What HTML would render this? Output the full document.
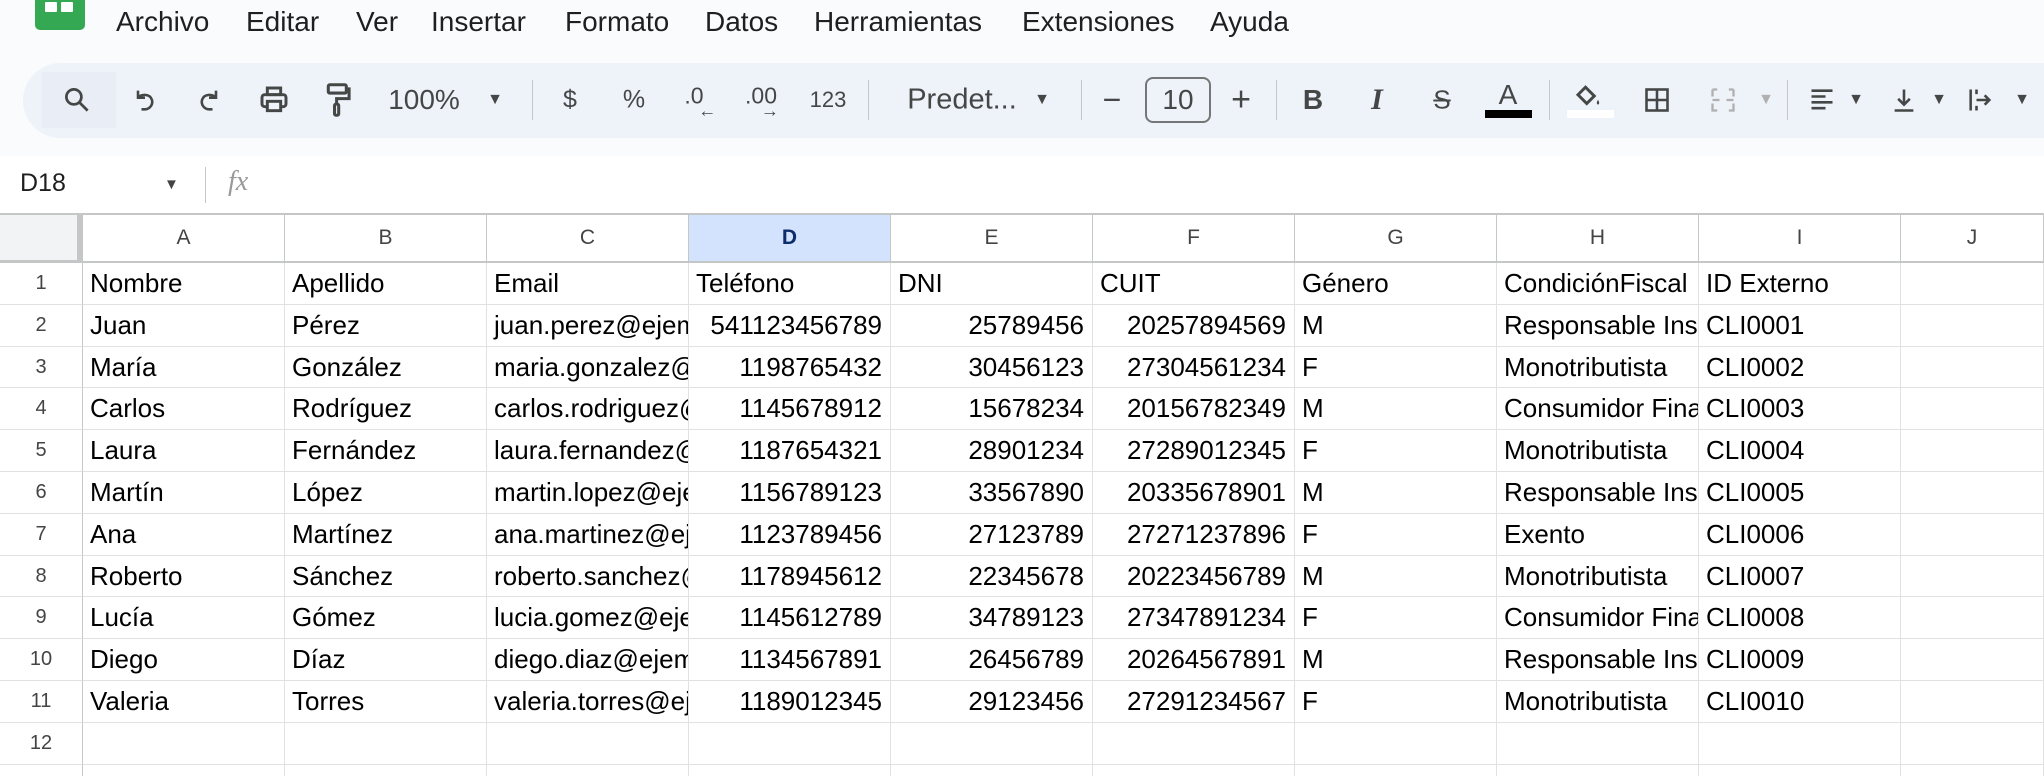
<!DOCTYPE html>
<html style="height:776px;overflow:hidden"><head><meta charset="utf-8"><style>
*{box-sizing:border-box;margin:0;padding:0}
body{width:2044px;height:776px;overflow:hidden;background:#fff;font-family:"Liberation Sans",Arial,sans-serif;position:relative;color:#1f1f1f}
.top{position:absolute;left:0;top:0;width:2044px;height:156px;background:#f9fbfd}
.menu{position:absolute;top:6px;font-size:28px;color:#1f1f1f}
.pill{position:absolute;left:23px;top:63px;width:2100px;height:75px;border-radius:38px;background:#eef2f9}
.ic{position:absolute;top:100px;transform:translate(-50%,-50%);color:#444746;font-size:24px;white-space:nowrap}
.sep{position:absolute;top:80px;width:1px;height:40px;background:#c7c7c7}
svg{display:block}
.wrap{position:absolute;left:0;top:213px;width:2044px;height:563px;overflow:hidden}
.grid{display:grid;grid-template-columns:83px repeat(9,202px) 143px;grid-template-rows:48px repeat(13,41.8px);border-top:2px solid #c4c7c5}
.grid div{border-right:1px solid #e1e1e1;border-bottom:1px solid #e1e1e1;white-space:nowrap;overflow:hidden;font-size:26px;line-height:41px;padding:0 7px;color:#000}
.grid .h{text-align:center;font-size:21px;color:#444;line-height:46px;border-right-color:#c4c7c5;border-bottom:2px solid #c4c7c5}
.grid .hd{background:#d3e3fd;color:#0b2e6b;font-weight:bold}
.grid .corner{background:#f1f3f4;border-right:6px solid #c4c7c5;border-bottom:3px solid #c4c7c5}
.grid .r{text-align:center;font-size:20px;color:#444;border-right:1px solid #c4c7c5;padding:0}
.grid .n{text-align:right;padding-right:8px}
</style></head><body>
<div class="top"></div>
<div style="position:absolute;left:35px;top:-6px;width:50px;height:36px;background:#34a853;border-radius:5px"></div>
<div style="position:absolute;left:45px;top:2px;width:12px;height:10px;background:#fff;border-radius:1px"></div>
<div style="position:absolute;left:61px;top:2px;width:12px;height:10px;background:#fff;border-radius:1px"></div>
<div class="menu" style="left:116px">Archivo</div>
<div class="menu" style="left:246px">Editar</div>
<div class="menu" style="left:356px">Ver</div>
<div class="menu" style="left:431px">Insertar</div>
<div class="menu" style="left:565px">Formato</div>
<div class="menu" style="left:705px">Datos</div>
<div class="menu" style="left:814px">Herramientas</div>
<div class="menu" style="left:1022px">Extensiones</div>
<div class="menu" style="left:1210px">Ayuda</div>

<div class="pill"></div>
<div style="position:absolute;left:42px;top:72px;width:74px;height:56px;background:#e9eef6"></div>
<div class="ic" style="left:77px"><svg width="30" height="30" viewBox="0 0 24 24" fill="none" stroke="#444746" stroke-width="2.2"><circle cx="9.5" cy="9.5" r="6"/><path d="M14 14l6.5 6.5"/></svg></div>
<div class="ic" style="left:145px"><svg width="28" height="28" viewBox="0 0 24 24" fill="none" stroke="#444746" stroke-width="2.2"><path d="M6 4v6h6M6 10c2-3 10-4 12 2 1 4-2 8-6 8H9"/></svg></div>
<div class="ic" style="left:209px"><svg width="28" height="28" viewBox="0 0 24 24" fill="none" stroke="#444746" stroke-width="2.2"><path d="M18 4v6h-6M18 10c-2-3-10-4-12 2-1 4 2 8 6 8h3"/></svg></div>
<div class="ic" style="left:274px"><svg width="32" height="32" viewBox="0 0 24 24" fill="none" stroke="#444746" stroke-width="2.2"><rect x="7" y="3" width="10" height="5"/><rect x="3" y="8" width="18" height="9" rx="2"/><rect x="7" y="13" width="10" height="7" fill="#eef2f9"/></svg></div>
<div class="ic" style="left:338px"><svg width="28" height="36" viewBox="0 0 20 26" fill="none" stroke="#444746" stroke-width="2.2"><rect x="3" y="2" width="13" height="6" rx="1"/><path d="M16 5h2v7H9v4"/><rect x="7.5" y="16" width="3" height="8" rx="1"/></svg></div>
<div class="ic" style="left:424px;font-size:28px">100%</div>
<div class="ic" style="left:495px;font-size:16px">▼</div>
<div class="sep" style="left:532px"></div>
<div class="ic" style="left:570px;font-size:25px">$</div>
<div class="ic" style="left:634px;font-size:25px">%</div>
<div class="ic" style="left:694px;font-size:23px;top:96px">.0<span style="position:absolute;left:14px;top:18px;font-size:18px">←</span></div>
<div class="ic" style="left:761px;font-size:23px;top:96px">.00<span style="position:absolute;left:16px;top:18px;font-size:18px">→</span></div>
<div class="ic" style="left:828px;font-size:22px">123</div>
<div class="sep" style="left:868px"></div>
<div class="ic" style="left:962px;font-size:29px">Predet...</div>
<div class="ic" style="left:1042px;font-size:16px">▼</div>
<div class="sep" style="left:1081px"></div>
<div class="ic" style="left:1112px;font-size:32px">−</div>
<div style="position:absolute;left:1145px;top:77px;width:66px;height:46px;border:2px solid #747775;border-radius:8px;text-align:center;line-height:42px;font-size:28px;color:#444746">10</div>
<div class="ic" style="left:1241px;font-size:34px">+</div>
<div class="sep" style="left:1276px"></div>
<div class="ic" style="left:1313px;font-size:28px;font-weight:bold">B</div>
<div class="ic" style="left:1377px;font-size:30px;font-style:italic;font-family:'Liberation Serif',serif;font-weight:bold">I</div>
<div class="ic" style="left:1442px;font-size:26px;text-decoration:line-through">S</div>
<div class="ic" style="left:1508px;font-size:28px;top:95px">A</div>
<div style="position:absolute;left:1485px;top:110px;width:47px;height:8px;background:#000"></div>
<div class="sep" style="left:1549px"></div>
<div class="ic" style="left:1588px;top:96px"><svg width="30" height="30" viewBox="0 0 24 24" fill="#444746"><path d="M4 11l6-6 7 7-6 6z" fill="none" stroke="#444746" stroke-width="2.4"/><path d="M20 15c1 2 1.5 3 0 4-1.5-1-1-2 0-4z"/></svg></div>
<div style="position:absolute;left:1567px;top:110px;width:47px;height:8px;background:#fff"></div>
<div class="ic" style="left:1657px"><svg width="28" height="28" viewBox="0 0 24 24" fill="none" stroke="#444746" stroke-width="2.2"><rect x="3" y="3" width="18" height="18"/><path d="M12 3v18M3 12h18"/></svg></div>
<div class="ic" style="left:1723px"><svg width="28" height="30" viewBox="0 0 24 24" fill="none" stroke="#b0b0b0" stroke-width="2"><path d="M3 3h4M3 3v6M3 15v6h4M21 3h-4M21 3v6M21 15v6h-4M3 12h6M21 12h-6"/></svg></div>
<div class="ic" style="left:1766px;font-size:16px;color:#b0b0b0">▼</div>
<div class="sep" style="left:1787px"></div>
<div class="ic" style="left:1822px"><svg width="28" height="28" viewBox="0 0 24 24" stroke="#444746" stroke-width="2.2"><path d="M3 4h18M3 9h12M3 14h18M3 19h12"/></svg></div>
<div class="ic" style="left:1856px;font-size:16px">▼</div>
<div class="ic" style="left:1904px"><svg width="28" height="30" viewBox="0 0 24 24" fill="none" stroke="#444746" stroke-width="2.2"><path d="M12 3v13M7 11l5 5 5-5M4 21h16"/></svg></div>
<div class="ic" style="left:1939px;font-size:16px">▼</div>
<div class="ic" style="left:1980px"><svg width="28" height="30" viewBox="0 0 24 24" fill="none" stroke="#444746" stroke-width="2.2"><path d="M4 3v18M9 12h11M16 8l4 4-4 4M9 3v4M9 17v4"/></svg></div>
<div class="ic" style="left:2022px;font-size:16px">▼</div>

<div style="position:absolute;left:20px;top:169px;font-size:25px;color:#1f1f1f">D18</div>
<div style="position:absolute;left:164px;top:176px;font-size:15px;color:#444">▼</div>
<div style="position:absolute;left:205px;top:167px;width:1px;height:36px;background:#c7c7c7"></div>
<div style="position:absolute;left:228px;top:166px;font-size:28px;font-style:italic;color:#999;font-family:'Liberation Serif',serif">fx</div>

<div class="wrap"><div class="grid">
<div class="h corner"></div><div class="h">A</div><div class="h">B</div><div class="h">C</div><div class="h hd">D</div><div class="h">E</div><div class="h">F</div><div class="h">G</div><div class="h">H</div><div class="h">I</div><div class="h">J</div>
<div class="r">1</div><div>Nombre</div><div>Apellido</div><div>Email</div><div>Teléfono</div><div>DNI</div><div>CUIT</div><div>Género</div><div>CondiciónFiscal</div><div>ID Externo</div><div></div>
<div class="r">2</div><div>Juan</div><div>Pérez</div><div>juan.perez@ejemplo.com</div><div class="n">541123456789</div><div class="n">25789456</div><div class="n">20257894569</div><div>M</div><div>Responsable Inscripto</div><div>CLI0001</div><div></div>
<div class="r">3</div><div>María</div><div>González</div><div>maria.gonzalez@ejemplo.com</div><div class="n">1198765432</div><div class="n">30456123</div><div class="n">27304561234</div><div>F</div><div>Monotributista</div><div>CLI0002</div><div></div>
<div class="r">4</div><div>Carlos</div><div>Rodríguez</div><div>carlos.rodriguez@ejemplo.com</div><div class="n">1145678912</div><div class="n">15678234</div><div class="n">20156782349</div><div>M</div><div>Consumidor Final</div><div>CLI0003</div><div></div>
<div class="r">5</div><div>Laura</div><div>Fernández</div><div>laura.fernandez@ejemplo.com</div><div class="n">1187654321</div><div class="n">28901234</div><div class="n">27289012345</div><div>F</div><div>Monotributista</div><div>CLI0004</div><div></div>
<div class="r">6</div><div>Martín</div><div>López</div><div>martin.lopez@ejemplo.com</div><div class="n">1156789123</div><div class="n">33567890</div><div class="n">20335678901</div><div>M</div><div>Responsable Inscripto</div><div>CLI0005</div><div></div>
<div class="r">7</div><div>Ana</div><div>Martínez</div><div>ana.martinez@ejemplo.com</div><div class="n">1123789456</div><div class="n">27123789</div><div class="n">27271237896</div><div>F</div><div>Exento</div><div>CLI0006</div><div></div>
<div class="r">8</div><div>Roberto</div><div>Sánchez</div><div>roberto.sanchez@ejemplo.com</div><div class="n">1178945612</div><div class="n">22345678</div><div class="n">20223456789</div><div>M</div><div>Monotributista</div><div>CLI0007</div><div></div>
<div class="r">9</div><div>Lucía</div><div>Gómez</div><div>lucia.gomez@ejemplo.com</div><div class="n">1145612789</div><div class="n">34789123</div><div class="n">27347891234</div><div>F</div><div>Consumidor Final</div><div>CLI0008</div><div></div>
<div class="r">10</div><div>Diego</div><div>Díaz</div><div>diego.diaz@ejemplo.com</div><div class="n">1134567891</div><div class="n">26456789</div><div class="n">20264567891</div><div>M</div><div>Responsable Inscripto</div><div>CLI0009</div><div></div>
<div class="r">11</div><div>Valeria</div><div>Torres</div><div>valeria.torres@ejemplo.com</div><div class="n">1189012345</div><div class="n">29123456</div><div class="n">27291234567</div><div>F</div><div>Monotributista</div><div>CLI0010</div><div></div>
<div class="r">12</div><div></div><div></div><div></div><div></div><div></div><div></div><div></div><div></div><div></div><div></div>
<div class="r"></div><div></div><div></div><div></div><div></div><div></div><div></div><div></div><div></div><div></div><div></div>
</div></div>
</body></html>
